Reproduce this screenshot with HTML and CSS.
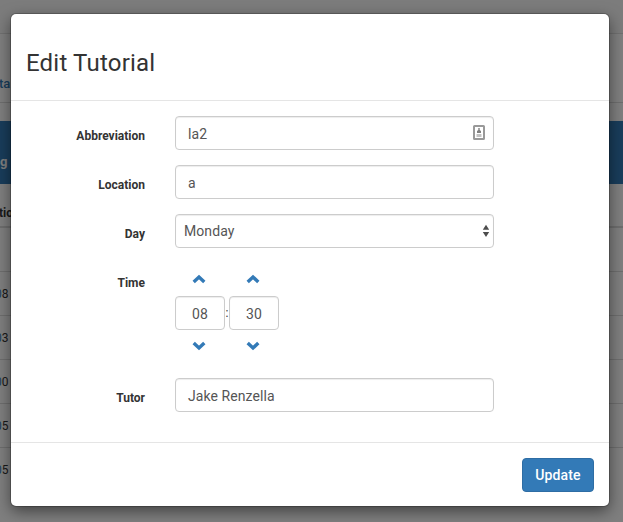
FILE: index.html
```html
<!DOCTYPE html>
<html lang="en">
<head>
<meta charset="utf-8">
<title>Edit Tutorial</title>
<link rel="stylesheet" href="styles.css">
</head>
<body>
<div class="page">
  <div class="navbar"></div>
  <div class="tabs"><span>ta</span></div>
  <div class="panel-heading"><span>g</span></div>
  <div class="table">
    <div class="thead">tio</div>
    <div class="row"></div>
    <div class="row"><i>0</i>8</div>
    <div class="row"><i>0</i>3</div>
    <div class="row"><i>0</i>0</div>
    <div class="row"><i>0</i>5</div>
    <div class="row"><i>0</i>5</div>
  </div>
</div>
<div class="backdrop">
  <form class="modal">
    <header class="modal-header"><h3>Edit Tutorial</h3></header>
    <div class="modal-body">
      <div class="group"><label>Abbreviation</label>
        <div class="control">la2
          <svg class="autofill" width="12" height="16" viewBox="0 0 12 16"><rect x="1" y="1" width="10" height="13" rx=".5" fill="#fff" stroke="#999" stroke-width="2"/><path d="M5.3 3h1.4v2L8 6v2H4V6l1.3-1z" fill="#808080"/><path d="M3.5 9h5v3h-5z" fill="#c2c2c2"/></svg>
        </div>
      </div>
      <div class="group"><label>Location</label><div class="control">a</div></div>
      <div class="group"><label>Day</label>
        <div class="control select">Monday
          <svg width="8" height="14" viewBox="0 0 8 14"><path d="M4 0.8 7.2 5.7H.8zM.8 8H7.2L4 12.9z" fill="#4d4d4d"/></svg>
        </div>
      </div>
      <div class="group time"><label>Time</label>
        <div class="timepicker">
          <span class="step"><svg width="14" height="10" viewBox="0 0 14 10"><path d="M1.7 8 7 3l5.3 5"/></svg></span><span></span>
          <span class="step"><svg width="14" height="10" viewBox="0 0 14 10"><path d="M1.7 8 7 3l5.3 5"/></svg></span>
          <div class="control digits">08</div><span class="colon">:</span><div class="control digits">30</div>
          <span class="step"><svg width="14" height="10" viewBox="0 0 14 10"><path d="M1.7 2 7 7l5.3-5"/></svg></span><span></span>
          <span class="step"><svg width="14" height="10" viewBox="0 0 14 10"><path d="M1.7 2 7 7l5.3-5"/></svg></span>
        </div>
      </div>
      <div class="group"><label>Tutor</label><div class="control">Jake Renzella</div></div>
    </div>
    <footer class="modal-footer"><button type="button">Update</button></footer>
  </form>
</div>
</body>
</html>
```
FILE: styles.css
```css
* { box-sizing: border-box; }
body {
  margin: 0;
  height: 522px;
  overflow: hidden;
  font: 14px/20px Roboto, "Liberation Sans", sans-serif;
  color: #333;
  background: #fff;
}
.page { height: 522px; overflow: hidden; }
.navbar { height: 34px; background: #f8f8f8; border-bottom: 1px solid #e0e0e0; }
.tabs { height: 69px; padding-top: 40px; border-bottom: 1px solid #ddd; color: #337ab7; font-size: 13px; font-weight: 500; }
.tabs span { margin-left: -1px; }
.panel-heading { height: 63px; margin-top: 18px; padding-top: 31px; background: #337ab7; color: #fff; font-size: 13px; font-weight: 700; }
.thead { height: 44px; padding-top: 19px; border-bottom: 2px solid #ddd; font-size: 12px; font-weight: 700; text-indent: -1px; }
.row { height: 44px; padding-top: 12px; border-bottom: 1px solid #ddd; font-size: 12px; text-indent: -5px; }
.row:last-child { border: 0; }
.row i { font-style: normal; color: #337ab7; }
.backdrop {
  position: absolute;
  inset: 0;
  padding: 14px 14px 0 11px;
  background: rgba(0, 0, 0, .5);
}
.modal {
  display: flex;
  flex-direction: column;
  height: 492px;
  border-radius: 5px;
  background: #fff;
  box-shadow: 0 0 0 1px rgba(0, 0, 0, .2), 0 5px 15px rgba(0, 0, 0, .5);
}
.modal-header { height: 87px; padding: 36px 15px 0; border-bottom: 1px solid #e5e5e5; }
h3 { margin: 0; font-size: 24px; line-height: 27px; font-weight: 400; letter-spacing: .2px; }
.modal-body { flex: 1; padding: 15px; }
.group { display: grid; grid-template-columns: 119px 319px; column-gap: 30px; margin-bottom: 15px; }
label { padding-top: 10px; text-align: right; font-size: 12px; line-height: 20px; font-weight: 700; }
.control {
  display: flex;
  align-items: center;
  justify-content: space-between;
  height: 34px;
  padding: 2px 8px 0 12px;
  border: 1px solid #ccc;
  border-radius: 4px;
  background: #fff;
  color: #555;
  letter-spacing: .08px;
  box-shadow: inset 0 1px 1px rgba(0, 0, 0, .075);
}
.select { padding: 0 3px 0 8px; }
.autofill { margin-top: -2px; }
.time { height: 100px; }
.timepicker { display: grid; grid-template: 33px 34px 33px / 50px 4px 50px; }
.step { display: flex; align-items: center; justify-content: center; padding: 0 2px 2px 0; }
.step path { fill: none; stroke: #337ab7; stroke-width: 3.4; }
.digits { justify-content: center; padding: 2px 0 0; }
.colon { line-height: 35px; font-size: 12px; text-align: center; }
.modal-footer { display: flex; justify-content: flex-end; height: 64px; padding: 15px; border-top: 1px solid #e5e5e5; }
button {
  width: 72px;
  height: 34px;
  padding: 0;
  border: 1px solid #2e6da4;
  border-radius: 4px;
  background: #337ab7;
  color: #fff;
  font: 500 14px/20px Roboto, "Liberation Sans", sans-serif;
  letter-spacing: .15px;
}
```
